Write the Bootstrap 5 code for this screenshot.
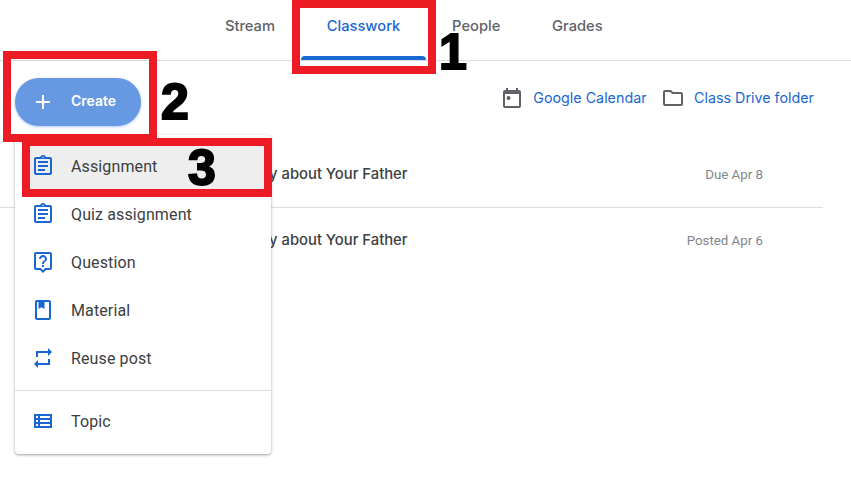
<!doctype html>
<html lang="en">
<head>
<meta charset="utf-8">
<title>Classwork</title>
<link href="https://cdn.jsdelivr.net/npm/bootstrap@5.3.0/dist/css/bootstrap.min.css" rel="stylesheet">
<style>
body{font-family:Roboto,"Liberation Sans",sans-serif;color:#3c4043;background:#fff;overflow:hidden}
.page{position:relative;height:487px}
.tabbar{height:61px;border-bottom:1px solid #dadce0;padding-left:199px}
.tabitem{position:relative;display:block;padding:15px 25.9px 0;height:60px;color:#5f6368;font:500 14.7px/22px "Inter",Roboto,sans-serif;text-decoration:none}
.tabitem.on{color:#1967d2}
.tabitem.on::after{content:"";position:absolute;left:0;right:0;bottom:0;height:4px;background:#1967d2;border-radius:4px 4px 0 0}
.toolbar{padding:17px 37px 0 15px}
.anchor{position:relative}
.createbtn{width:126px;height:48px;border-radius:24px;background:#6699e1;border:0;color:#fff;font:600 14px/1 "Inter",Roboto,sans-serif;box-shadow:0 1px 3px rgba(66,133,244,.45);display:flex;align-items:center;padding:0 0 2px 16px;gap:16px}
.createbtn svg{margin-top:2px}
.createbtn:hover{background:#6699e1;color:#fff}
.toollink{color:#1967d2;font:400 14.3px/20px "Inter",Roboto,sans-serif;text-decoration:none;display:flex;align-items:center;gap:9px}
.toollinks{margin-top:-8px;gap:14.5px}
.menubox{display:block;top:57px;left:0;width:256px;padding:7px 0 9px;margin:0;border:0;border-radius:4px;box-shadow:0 1px 2px rgba(60,64,67,.3),0 1px 3px 1px rgba(60,64,67,.15);z-index:5}
.menubox .dropdown-item{height:48px;padding:0 16px;display:flex;align-items:center;gap:16px;font-size:16px;letter-spacing:.12px;color:#3c4043}
.menubox .dropdown-item span{padding-top:2px}
.menubox .dropdown-divider{margin:8px 0 6px;border-color:#dadce0;opacity:1}
.menubox svg{fill:#1967d2;flex:none;width:24px;height:24px}
.menubox .picked{background:linear-gradient(#eee,#eee) 15px 0/234px 100% no-repeat}
.rows{margin:17px 28px 0 0}
.rowitem{height:65px;padding:0 60px 0 0;border:0;border-bottom:1px solid #dadce0;background:none;border-radius:0}
.rowitem:last-child{border-bottom:0}
.rowtitle{font:500 14.8px/20px "Inter",Roboto,sans-serif;color:#3c4043;margin-left:236px;padding-bottom:2px}
.rowdate{font-size:13.3px;color:#80868b}
.gicon{fill:#5f6368;width:24px;height:24px;flex:none}
.plusicon{fill:#fff;width:24px;height:24px;flex:none}
.notebox{position:absolute;border:8px solid #ed1c24;z-index:10;pointer-events:none}
.nb1{left:292px;top:0;width:144px;height:74px}
.nb2{left:3px;top:51px;width:154px;height:91px}
.nb3{left:22px;top:138px;width:250px;height:59px}
.notenum{position:absolute;z-index:11;font:700 50px/50px "Liberation Sans",sans-serif;color:#000;-webkit-text-stroke:2px #000}
.nn1{left:439px;top:27px}
.nn2{left:161px;top:77px}
.nn3{left:188px;top:143px}
</style>
</head>
<body>
<div class="page">
  <nav class="nav tabbar">
    <a class="tabitem" href="#">Stream</a>
    <a class="tabitem on" href="#">Classwork</a>
    <a class="tabitem" href="#">People</a>
    <a class="tabitem" href="#">Grades</a>
  </nav>
  <div class="toolbar d-flex justify-content-between align-items-center">
    <div class="anchor">
      <button class="btn createbtn" type="button">
        <svg class="plusicon" viewBox="0 0 24 24"><path d="M19 13h-6v6h-2v-6H5v-2h6V5h2v6h6z"/></svg>
        <span>Create</span>
      </button>
      <div class="dropdown-menu menubox">
        <a class="dropdown-item picked" href="#"><svg viewBox="0 0 24 24"><path fill-rule="evenodd" d="M7 15h7v2H7zm0-4h10v2H7zm0-4h10v2H7zm12-4h-4.18C14.4 1.84 13.3 1 12 1s-2.4.84-2.82 2H5c-1.1 0-2 .9-2 2v14c0 1.1.9 2 2 2h14c1.1 0 2-.9 2-2V5c0-1.1-.9-2-2-2zM12 2.75c.41 0 .75.34.75.75s-.34.75-.75.75-.75-.34-.75-.75.34-.75.75-.75zM19 19H5V5h14z"/></svg><span>Assignment</span></a>
        <a class="dropdown-item" href="#"><svg viewBox="0 0 24 24"><path fill-rule="evenodd" d="M7 15h7v2H7zm0-4h10v2H7zm0-4h10v2H7zm12-4h-4.18C14.4 1.84 13.3 1 12 1s-2.4.84-2.82 2H5c-1.1 0-2 .9-2 2v14c0 1.1.9 2 2 2h14c1.1 0 2-.9 2-2V5c0-1.1-.9-2-2-2zM12 2.75c.41 0 .75.34.75.75s-.34.75-.75.75-.75-.34-.75-.75.34-.75.75-.75zM19 19H5V5h14z"/></svg><span>Quiz assignment</span></a>
        <a class="dropdown-item" href="#"><svg viewBox="0 0 24 24"><path d="M19 2H5c-1.1 0-2 .9-2 2v14c0 1.1.9 2 2 2h4l3 3 3-3h4c1.1 0 2-.9 2-2V4c0-1.1-.9-2-2-2zm0 16h-4.83L12 20.17 9.83 18H5V4h14v14zm-8-3h2v2h-2zm1-8c1.1 0 2 .9 2 2 0 2-3 1.75-3 5h2c0-2.25 3-2.5 3-5 0-2.21-1.79-4-4-4S8 6.79 8 9h2c0-1.1.9-2 2-2z"/></svg><span>Question</span></a>
        <a class="dropdown-item" href="#"><svg viewBox="0 0 24 24"><path d="M18 2H6c-1.1 0-2 .9-2 2v16c0 1.1.9 2 2 2h12c1.1 0 2-.9 2-2V4c0-1.1-.9-2-2-2zm0 18H6V4h1.5v7l3-1.8 3 1.8V4H18z"/></svg><span>Material</span></a>
        <a class="dropdown-item" href="#"><svg viewBox="0 0 24 24"><path d="M7 7h10v3l4-4-4-4v3H5v6h2V7zm10 10H7v-3l-4 4 4 4v-3h12v-6h-2v4z"/></svg><span>Reuse post</span></a>
        <hr class="dropdown-divider">
        <a class="dropdown-item" href="#"><svg viewBox="0 0 24 24"><path d="M3 5v14h18V5H3zm4 12H5v-2h2v2zm0-4H5v-2h2v2zm0-4H5V7h2v2zm12 8H9v-2h10v2zm0-4H9v-2h10v2zm0-4H9V7h10v2z"/></svg><span>Topic</span></a>
      </div>
    </div>
    <div class="toollinks d-flex">
      <a class="toollink" href="#"><svg class="gicon" viewBox="0 0 24 24"><path d="M19 4h-1V2h-2v2H8V2H6v2H5c-1.1 0-2 .9-2 2v14c0 1.1.9 2 2 2h14c1.1 0 2-.9 2-2V6c0-1.1-.9-2-2-2zm0 16H5V8h14v12z"/><circle cx="8.5" cy="12" r="2"/></svg>Google Calendar</a>
      <a class="toollink" href="#"><svg class="gicon" viewBox="0 0 24 24"><path d="M9.17 6l2 2H20v10H4V6h5.17M10 4H4c-1.1 0-1.99.9-1.99 2L2 18c0 1.1.9 2 2 2h16c1.1 0 2-.9 2-2V8c0-1.1-.9-2-2-2h-8l-2-2z"/></svg>Class Drive folder</a>
    </div>
  </div>
  <div class="list-group rows">
    <div class="list-group-item rowitem d-flex justify-content-between align-items-center"><span class="rowtitle">Essay about Your Father</span><span class="rowdate">Due Apr 8</span></div>
    <div class="list-group-item rowitem d-flex justify-content-between align-items-center"><span class="rowtitle">Essay about Your Father</span><span class="rowdate">Posted Apr 6</span></div>
  </div>
  <div class="notebox nb1"></div>
  <div class="notebox nb2"></div>
  <div class="notebox nb3"></div>
  <span class="notenum nn1">1</span>
  <span class="notenum nn2">2</span>
  <span class="notenum nn3">3</span>
</div>
<script src="https://cdn.jsdelivr.net/npm/bootstrap@5.3.0/dist/js/bootstrap.bundle.min.js"></script>
</body>
</html>
